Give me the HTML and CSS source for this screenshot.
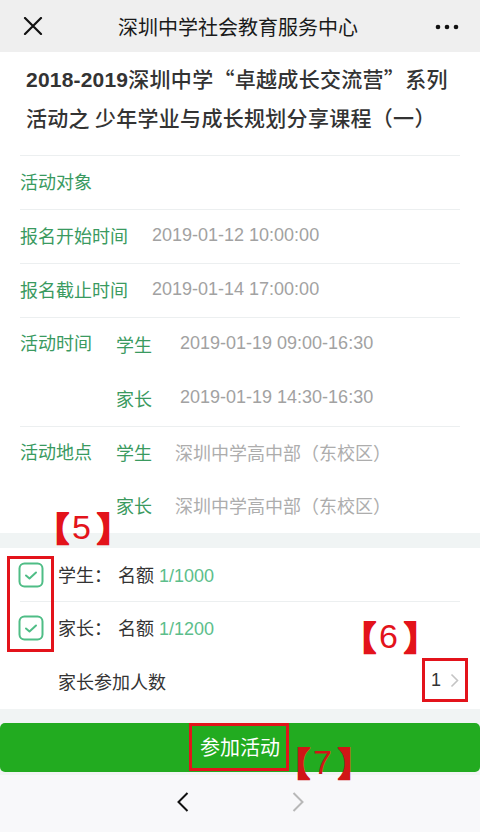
FILE: index.html
```html
<!DOCTYPE html>
<html lang="zh-CN">
<head>
<meta charset="utf-8">
<title>深圳中学社会教育服务中心</title>
<link rel="stylesheet" href="styles.css">
</head>
<body>
<div class="page">
  <header class="header">
    <svg class="ico-close" width="20" height="18" viewBox="0 0 20 18"><path d="M2 1 L18 17 M18 1 L2 17" stroke="#111" stroke-width="2.2" fill="none" stroke-linecap="round"/></svg>
    <div class="header-title">深圳中学社会教育服务中心</div>
    <svg class="ico-more" width="24" height="6" viewBox="0 0 24 6"><circle cx="3" cy="3" r="2.3" fill="#111"/><circle cx="12" cy="3" r="2.3" fill="#111"/><circle cx="21" cy="3" r="2.3" fill="#111"/></svg>
  </header>

  <h1 class="title"><span class="num">2018-2019</span>深圳中学“卓越成长交流营”系列<br>活动之 少年学业与成长规划分享课程（一）</h1>

  <div class="info">
    <div class="row"><span class="label">活动对象</span></div>
    <div class="row"><span class="label w132">报名开始时间</span><span class="val">2019-01-12 10:00:00</span></div>
    <div class="row"><span class="label w132">报名截止时间</span><span class="val">2019-01-14 17:00:00</span></div>
    <div class="row multi">
      <span class="label w96">活动时间</span>
      <div class="subs">
        <div class="sub"><span class="sublabel">学生</span><span class="val time">2019-01-19 09:00-16:30</span></div>
        <div class="sub"><span class="sublabel">家长</span><span class="val time">2019-01-19 14:30-16:30</span></div>
      </div>
    </div>
    <div class="row multi loc">
      <span class="label w96">活动地点</span>
      <div class="subs">
        <div class="sub"><span class="sublabel">学生</span><span class="val place">深圳中学高中部（东校区）</span></div>
        <div class="sub"><span class="sublabel">家长</span><span class="val place">深圳中学高中部（东校区）</span></div>
      </div>
    </div>
  </div>

  <div class="checks">
    <div class="crow sep">
      <svg class="cb" width="26" height="26" viewBox="0 0 26 26"><rect x="1.5" y="1.5" width="23" height="23" rx="5" fill="none" stroke="#4fbd86" stroke-width="2"/><path d="M8 13.5 L11.5 16.5 L18 10.5" fill="none" stroke="#4fbd86" stroke-width="2" stroke-linecap="round" stroke-linejoin="round"/></svg>
      <span class="ctext">学生：</span><span class="ctext quota">名额 <span class="gnum">1/1000</span></span>
    </div>
    <div class="crow">
      <svg class="cb" width="26" height="26" viewBox="0 0 26 26"><rect x="1.5" y="1.5" width="23" height="23" rx="5" fill="none" stroke="#4fbd86" stroke-width="2"/><path d="M8 13.5 L11.5 16.5 L18 10.5" fill="none" stroke="#4fbd86" stroke-width="2" stroke-linecap="round" stroke-linejoin="round"/></svg>
      <span class="ctext">家长：</span><span class="ctext quota">名额 <span class="gnum">1/1200</span></span>
    </div>
    <div class="crow count">
      <span class="ctext">家长参加人数</span>
      <span class="cnt">1</span>
      <svg class="chev" width="9" height="15" viewBox="0 0 9 15"><path d="M1.5 1.5 L7.5 7.5 L1.5 13.5" fill="none" stroke="#c4c4c4" stroke-width="1.6"/></svg>
    </div>
  </div>

  <div class="footer">
    <button class="join">参加活动</button>
  </div>

  <nav class="toolbar">
    <svg width="12" height="20" viewBox="0 0 12 20"><path d="M10.5 1 L1.5 10 L10.5 19" fill="none" stroke="#111" stroke-width="2"/></svg>
    <svg width="12" height="20" viewBox="0 0 12 20"><path d="M1.5 1 L10.5 10 L1.5 19" fill="none" stroke="#b8b8b8" stroke-width="2"/></svg>
  </nav>

  <div class="mark box5"></div>
  <div class="mark box6"></div>
  <div class="mark box7"></div>
  <div class="tag tag5"><span class="br">【</span><span class="dg">5</span><span class="br">】</span></div>
  <div class="tag tag6"><span class="br">【</span><span class="dg">6</span><span class="br">】</span></div>
  <div class="tag tag7"><span class="br">【</span><span class="dg">7</span><span class="br">】</span></div>
</div>
</body>
</html>
```
FILE: styles.css
```css
* { box-sizing: border-box; }
html, body { margin: 0; padding: 0; }
body {
  font-family: "Liberation Sans", "Noto Sans CJK SC", sans-serif;
  background: #fff;
  color: #333;
}
.page {
  position: relative;
  width: 480px;
  height: 832px;
  overflow: hidden;
  display: flex;
  flex-direction: column;
}
.header {
  height: 52px;
  flex: none;
  background: #efefef;
  display: flex;
  align-items: center;
  padding: 0 21px 0 23px;
}
.header-title {
  flex: 1;
  text-align: center;
  font-size: 20px;
  color: #1a1a1a;
  padding-right: 2px;
}
.ico-more { margin-top: 1px; }
.title {
  margin: 0;
  height: 103px;
  padding: 7px 10px 0 26px;
  font-family: "Noto Sans CJK SC", sans-serif;
  font-size: 21px;
  line-height: 39px;
  font-weight: 500;
  color: #333;
  letter-spacing: 0.3px;
  white-space: nowrap;
  flex: none;
}
.title .num { font-family: "Liberation Sans", sans-serif; font-weight: 700; letter-spacing: 0.2px; line-height: 20px; }
.info { margin: 0 20px; flex: none; }
.row {
  display: flex;
  align-items: center;
  height: 54px;
  padding-bottom: 3px;
  border-top: 1px solid #eceff0;
  font-size: 18px;
}
.row.multi { height: 109px; align-items: flex-start; padding-bottom: 0; }
.row.loc { height: 107px; }
.label { color: #3a9a5f; flex: none; }
.multi .label { line-height: 53px; }
.w132 { width: 132px; }
.w96 { width: 96px; }
.val { color: #a2a2a2; }
.subs { display: flex; flex-direction: column; }
.sub { display: flex; align-items: center; height: 54px; padding-bottom: 3px; }
.loc .sub { height: 53px; }
.sublabel { color: #3a9a5f; width: 64px; flex: none; }
.loc .sublabel { width: 59px; }
.place { color: #adadad; }
.checks {
  flex: none;
  border-top: 15px solid #f0f4f4;
}
.crow {
  display: flex;
  align-items: center;
  height: 54px;
  padding-left: 18px;
  padding-bottom: 3px;
  font-size: 18px;
  color: #333;
}
.crow.sep { position: relative; }
.crow.sep::after {
  content: "";
  position: absolute;
  left: 20px;
  right: 20px;
  bottom: 0;
  border-bottom: 1px solid #eceff0;
}
.crow + .crow { height: 53px; }
.crow.count { height: 54px; }
.cb { flex: none; margin-right: 14px; margin-top: 2px; }
.quota { margin-left: 6px; }
.gnum { color: #5cbe8b; }
.count { padding-left: 58px; padding-right: 21px; }
.count .ctext { flex: 1; }
.cnt { margin-right: 9px; }
.footer {
  flex: none;
  background: #f1f4f4;
  padding: 14px 0 3px;
}
.join {
  display: block;
  width: 100%;
  height: 49px;
  border: none;
  border-radius: 5px;
  background: #22ab20;
  color: #fff;
  font-family: "Noto Sans CJK SC", sans-serif;
  font-size: 20px;
  padding: 0 0 2px;
}
.toolbar {
  flex: 1;
  background: #f8f8fa;
  display: flex;
  justify-content: center;
  align-items: center;
  gap: 103px;
  padding-bottom: 3px;
}
.mark {
  position: absolute;
  border: 3px solid #e3131b;
}
.box5 { left: 7px; top: 556px; width: 47px; height: 96px; }
.box6 { left: 422px; top: 658px; width: 46px; height: 44px; }
.box7 { left: 189px; top: 723px; width: 100px; height: 48px; }
.tag {
  position: absolute;
  display: flex;
  align-items: center;
  height: 32px;
  color: #e3131b;
  white-space: nowrap;
}
.tag .br {
  font-family: "Noto Sans CJK SC", sans-serif;
  font-weight: 700;
  font-size: 33px;
  line-height: 32px;
  -webkit-text-stroke: 2px currentColor;
}
.tag .dg {
  font-family: "Liberation Sans", sans-serif;
  font-size: 34px;
  line-height: 32px;
  margin: 0 6px 0 3px;
}
.tag5 { left: 36px; top: 511px; }
.tag6 { left: 343px; top: 620px; }
.tag7 { left: 277px; top: 746px; color: #d01616; }
```
